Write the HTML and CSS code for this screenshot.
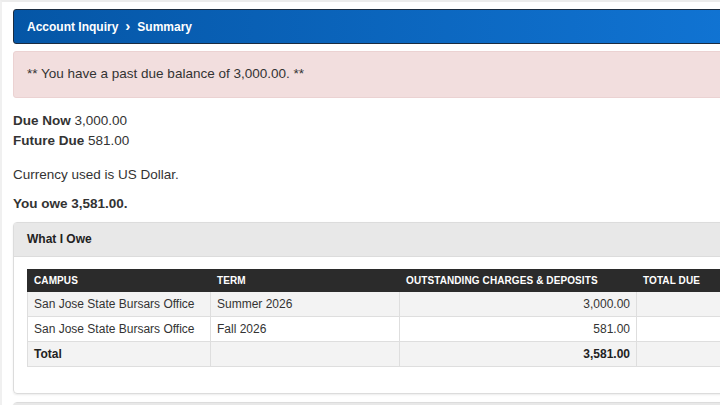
FILE: index.html
```html
<!DOCTYPE html>
<html lang="en">
<head>
    <meta charset="UTF-8">
    <title>Account Inquiry - Summary</title>
    <link rel="stylesheet" href="styles.css">
</head>
<body>
    <div class="page">
        <div class="crumbs">
            <span>Account Inquiry</span>
            <span class="sep">&#8250;</span>
            <span>Summary</span>
        </div>

        <div class="alert">** You have a past due balance of 3,000.00. **</div>

        <div class="dues">
            <p><strong>Due Now</strong> 3,000.00</p>
            <p><strong>Future Due</strong> 581.00</p>
        </div>

        <p class="currency">Currency used is US Dollar.</p>
        <p class="owe">You owe 3,581.00.</p>

        <div class="panel">
            <div class="panel-head">What I Owe</div>
            <div class="panel-body">
                <table>
                    <tr>
                        <th class="c-campus">Campus</th>
                        <th class="c-term">Term</th>
                        <th class="c-out">Outstanding Charges &amp; Deposits</th>
                        <th class="c-due">Total Due</th>
                    </tr>
                    <tr>
                        <td>San Jose State Bursars Office</td>
                        <td>Summer 2026</td>
                        <td class="num">3,000.00</td>
                        <td></td>
                    </tr>
                    <tr>
                        <td>San Jose State Bursars Office</td>
                        <td>Fall 2026</td>
                        <td class="num">581.00</td>
                        <td></td>
                    </tr>
                    <tr class="total">
                        <td>Total</td>
                        <td></td>
                        <td class="num">3,581.00</td>
                        <td></td>
                    </tr>
                </table>
            </div>
        </div>

        <div class="panel"><div class="panel-head">&nbsp;</div></div>
    </div>
</body>
</html>
```

FILE: styles.css
```css
html, body {
    margin: 0;
    padding: 0;
    overflow: hidden;
    background: #fff;
}
body {
    font-family: "Liberation Sans", Arial, sans-serif;
    font-size: 13.5px;
    color: #333;
}
.page {
    width: 800px;
    border-top: 2px solid #ececec;
    border-left: 2px solid #f0f0f0;
    padding: 7px 0 0 11px;
}
.crumbs {
    height: 33px;
    display: flex;
    align-items: center;
    gap: 7px;
    padding-left: 13px;
    background: linear-gradient(90deg, #0556a6, #1277d8);
    border: 1px solid #1c2c40;
    border-radius: 3px;
    color: #fff;
    font-size: 12px;
    font-weight: bold;
}
.crumbs .sep {
    font-size: 15px;
    line-height: 1;
    margin-top: -2px;
}
.alert {
    margin-top: 7px;
    padding: 12px 13px 13px;
    line-height: 20px;
    font-size: 13.5px;
    background: #f2dede;
    border: 1px solid #ebd2d2;
    border-radius: 3px;
    color: #333;
}
.dues {
    margin-top: 13px;
}
.dues p, .currency, .owe {
    margin: 0;
    line-height: 20px;
}
.currency {
    margin-top: 14px;
}
.owe {
    margin-top: 9px;
    font-weight: bold;
}
.panel {
    margin-top: 8px;
    border: 1px solid #dcdcdc;
    border-radius: 4px;
    box-shadow: 0 1px 2px rgba(0,0,0,0.08);
}
.panel-head {
    background: #e8e8e8;
    border-bottom: 1px solid #dcdcdc;
    height: 33px;
    line-height: 33px;
    padding-left: 13px;
    font-size: 12px;
    font-weight: bold;
    color: #222;
}
.panel-body {
    padding: 12px 13px 26px;
}
table {
    border-collapse: collapse;
    font-size: 12px;
}
th {
    background: #2b2b2b;
    color: #fff;
    font-size: 10px;
    font-weight: bold;
    text-transform: uppercase;
    letter-spacing: 0.1px;
    text-align: left;
    height: 21px;
    padding: 0 6px;
    border: 1px solid #2b2b2b;
    border-left: 1px solid #999;
}
th:first-child {
    border-left-color: #2b2b2b;
}
td {
    height: 24px;
    padding: 0 6px;
    border: 1px solid #dedede;
    color: #333;
}
tr:nth-child(even) td {
    background: #f3f3f3;
}
.num {
    text-align: right;
}
.total td {
    font-weight: bold;
    color: #222;
}
.c-campus { width: 170px; }
.c-term { width: 176px; }
.c-out { width: 224px; }
.c-due { width: 120px; }
```
